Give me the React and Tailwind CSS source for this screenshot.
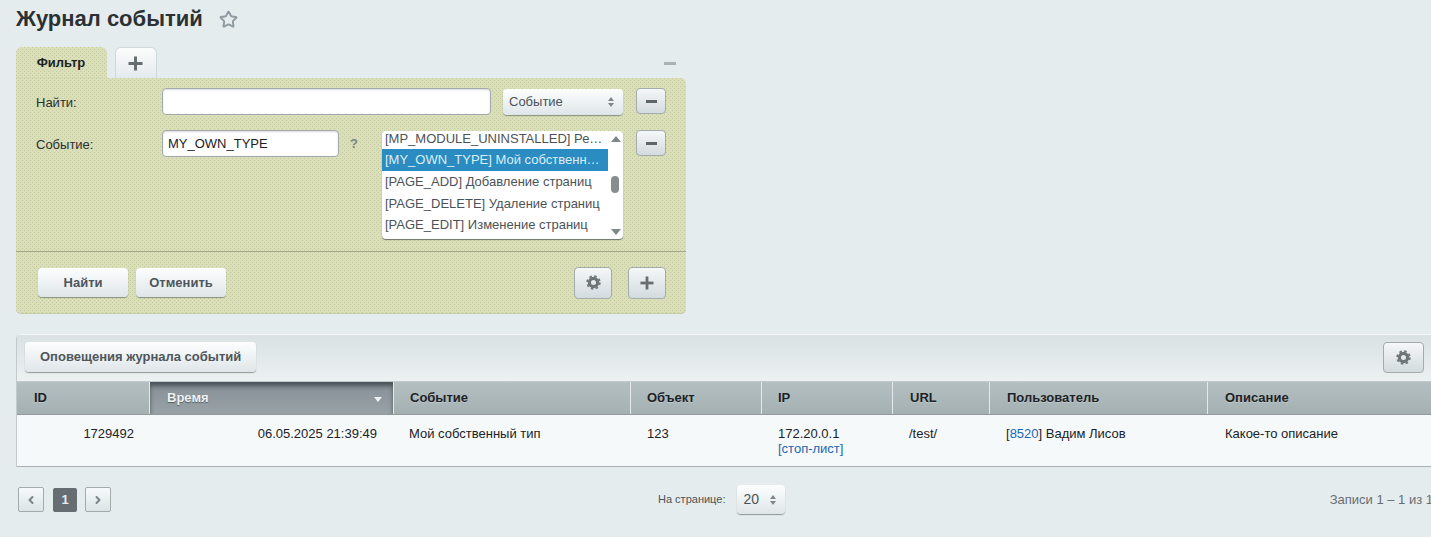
import { Star, ChevronLeft, ChevronRight } from 'lucide-react';

const dotted = 'bg-[#dadfba] bg-[radial-gradient(circle_at_0.5px_0.5px,#c3cb9d_0.75px,transparent_0.8px),radial-gradient(circle_at_2.5px_2.5px,#c3cb9d_0.75px,transparent_0.8px)] bg-[length:4px_4px]';
const lightBtn = 'bg-gradient-to-b from-[#fdfefe] to-[#dfe6e9] shadow-[0_1px_1px_rgba(70,80,80,0.55)]';
const iconBtn = 'flex items-center justify-center rounded-[4px] border border-[#a3abab] bg-gradient-to-b from-[#f5f7f8] to-[#d3dbde]';

const columns = [
  { title: 'ID', width: 'w-[133px]', pad: 'pl-[17px]' },
  { title: 'Время', width: 'w-[244px]', pad: 'pl-[17px]', sorted: true },
  { title: 'Событие', width: 'w-[237px]', pad: 'pl-4' },
  { title: 'Объект', width: 'w-[131px]', pad: 'pl-4' },
  { title: 'IP', width: 'w-[131px]', pad: 'pl-4' },
  { title: 'URL', width: 'w-[97px]', pad: 'pl-[17px]' },
  { title: 'Пользователь', width: 'w-[218px]', pad: 'pl-[17px]' },
  { title: 'Описание', width: 'w-[224px]', pad: 'pl-[17px]' },
];

const options = [
  '[PAGE_ADD] Добавление страниц',
  '[PAGE_DELETE] Удаление страниц',
  '[PAGE_EDIT] Изменение страниц',
];

function UpDown() {
  return (
    <span className="flex flex-col gap-[2px]">
      <span className="w-0 h-0 border-x-[3px] border-x-transparent border-b-[4px] border-b-[#7f878a]" />
      <span className="w-0 h-0 border-x-[3px] border-x-transparent border-t-[4px] border-t-[#7f878a]" />
    </span>
  );
}

function MinusButton() {
  return (
    <button className={`${iconBtn} w-[30px] h-[26px]`}>
      <span className="block w-[11px] h-[3px] bg-[#5d6567]" />
    </button>
  );
}

function PlusIcon({ size = 15 }) {
  return (
    <svg width={size} height={size} viewBox="0 0 15 15" fill="#666e71">
      <rect x="6" y="0.5" width="3" height="14" />
      <rect x="0.5" y="6" width="14" height="3" />
    </svg>
  );
}

function GearIcon() {
  return (
    <svg width="15" height="15" viewBox="0 0 16 16" fill="none" stroke="#6d7578">
      <circle cx="8" cy="8" r="4.4" strokeWidth="3.4" />
      <circle cx="8" cy="8" r="6.8" strokeWidth="1.8" strokeDasharray="2.67 2.67" />
    </svg>
  );
}

export default function App() {
  return (
    <div className="h-[537px] w-[1431px] overflow-hidden bg-[#e5ecee] text-[13px] text-[#1c2226] font-['Liberation_Sans',Arial,sans-serif]">
      <div className="flex items-center h-[38px] pl-4">
        <h1 className="text-[22px] leading-none font-bold text-[#2c3134]">Журнал событий</h1>
        <Star size={19} strokeWidth={2.4} className="ml-[16px] mt-px text-[#8f9ba1]" />
      </div>

      <div className="w-[670px] ml-4 mt-[9px]">
        <div className="flex items-end h-[31px]">
          <div className={`${dotted} w-[91px] h-[31px] rounded-t-[6px] flex items-center justify-center pl-[1px] text-[13px] font-bold text-[#1c2226]`}>
            <span className="pr-[2px]">Фильтр</span>
          </div>
          <div className="ml-2 w-[42px] h-[31px] rounded-t-[6px] border border-b-0 border-[#d0d8db] bg-gradient-to-b from-[#fbfcfc] to-[#e4eaec] flex items-center justify-center pr-[1px]">
            <PlusIcon />
          </div>
          <span className="ml-auto mr-[10px] mb-[13px] block w-[12px] h-[3px] bg-[#aab2b5]" />
        </div>

        <div className={`${dotted} h-[236px] rounded-b-[5px] rounded-tr-[5px] border-b border-[#c4cba5] flex flex-col`}>
          <div className="flex-1 pl-5 pr-5 pt-[10px] border-b border-[#a6ab8d]">
            <div className="flex items-start h-[27px]">
              <label className="w-[126px] mt-[5px] text-[13px] text-[#2b3034]">Найти:</label>
              <input className="w-[329px] h-[27px] rounded-[4px] border border-[#a1a9ad] bg-white shadow-[inset_0_1px_2px_rgba(0,0,0,0.15)]" />
              <div className={`${lightBtn} ml-3 mt-px w-[120px] h-[26px] rounded-[4px] flex items-center justify-between pl-[6px] pr-[9px] text-[#4b5358]`}>
                <span>Событие</span>
                <UpDown />
              </div>
              <div className="ml-[13px]"><MinusButton /></div>
            </div>

            <div className="flex items-start mt-[15px]">
              <label className="w-[126px] mt-[5px] text-[13px] text-[#2b3034]">Событие:</label>
              <input
                readOnly
                value="MY_OWN_TYPE"
                className="w-[177px] h-[27px] px-[5px] rounded-[4px] border border-[#a1a9ad] bg-white text-[13px] text-[#1c2226] shadow-[inset_0_1px_2px_rgba(0,0,0,0.15)]"
              />
              <span className="w-[43px] mt-[4px] pl-[11px] text-[13px] font-bold text-[#7d8584]">?</span>
              <div className="flex mt-px w-[241px] h-[108px] rounded-[4px] bg-white shadow-[0_1px_1px_rgba(60,70,70,0.7)] overflow-hidden text-[#4b5358] text-[13px] leading-[21.5px]">
                <div className="w-[226px] shrink-0">
                  <div className="h-[18px] leading-[15px] px-[3px] truncate">[MP_MODULE_UNINSTALLED] Ре…</div>
                  <div className="h-[22px] bg-[#2a8cc0] text-[#dcedf6] px-[3px] truncate">[MY_OWN_TYPE] Мой собственн…</div>
                  {options.map((o) => (
                    <div key={o} className="h-[21.5px] px-[3px] truncate">{o}</div>
                  ))}
                </div>
                <div className="relative flex-1">
                  <span className="absolute left-[3px] top-[5px] w-0 h-0 border-x-[5px] border-x-transparent border-b-[6px] border-b-[#7e8689]" />
                  <span className="absolute left-[3px] top-[45px] w-[8px] h-[17px] rounded-full bg-[#878e90]" />
                  <span className="absolute left-[3px] bottom-[4px] w-0 h-0 border-x-[5px] border-x-transparent border-t-[6px] border-t-[#7e8689]" />
                </div>
              </div>
              <div className="ml-[13px]"><MinusButton /></div>
            </div>
          </div>

          <div className="h-[61px] flex items-center pl-[22px] pr-5">
            <button className={`${lightBtn} w-[90px] h-[29px] rounded-[4px] text-[13px] font-bold text-[#4f565b]`}>Найти</button>
            <button className={`${lightBtn} ml-2 w-[90px] h-[29px] rounded-[4px] text-[13px] font-bold text-[#4f565b]`}>Отменить</button>
            <button className={`${iconBtn} ml-auto w-[38px] h-[32px]`}>
              <GearIcon />
            </button>
            <button className={`${iconBtn} ml-4 w-[38px] h-[32px]`}>
              <PlusIcon size={14} />
            </button>
          </div>
        </div>
      </div>

      <div className="ml-4 mt-5 w-[1415px] border-l border-[#c3cacc] border-t border-t-[#f6f8f8] rounded-tl-[5px]">
        <div className="h-[47px] flex items-center justify-between pl-2 pr-[7px] pb-[2px] bg-gradient-to-b from-[#d9e1e3] to-[#ecf1f2] border-b border-[#c2cacc]">
          <button className={`${lightBtn} h-[30px] px-[15px] rounded-[4px] text-[13px] font-bold text-[#4f565b]`}>
            Оповещения журнала событий
          </button>
          <button className={`${iconBtn} w-[41px] h-[31px]`}>
            <GearIcon />
          </button>
        </div>

        <div className="flex h-[33px] border-b border-[#8f9a9d]">
          {columns.map((c) => (
            <div
              key={c.title}
              className={`${c.width} ${c.pad} shrink-0 flex items-center text-[13px] font-bold border-r border-[#e4eaec] ${
                c.sorted
                  ? 'bg-gradient-to-b from-[#858f95] to-[#98a2a7] shadow-[inset_0_4px_4px_rgba(35,40,45,0.6)] text-[#eef2f3] [text-shadow:0_1px_1px_rgba(40,50,60,0.6)] justify-between pr-[11px]'
                  : 'bg-gradient-to-b from-[#b4bfc3] to-[#a5b0b3] text-[#1c2226] [text-shadow:0_1px_0_rgba(255,255,255,0.25)]'
              }`}
            >
              <span>{c.title}</span>
              {c.sorted && (
                <span className="w-0 h-0 mt-[2px] border-x-[4px] border-x-transparent border-t-[5px] border-t-[#eef2f3]" />
              )}
            </div>
          ))}
        </div>

        <div className="flex h-[52px] pt-[11px] bg-[#f5f9fa] border-b border-[#a9b1b2] text-[13px] leading-[15px]">
          <div className="w-[133px] shrink-0 pr-[16px] text-right">1729492</div>
          <div className="w-[244px] shrink-0 pr-[17px] text-right">06.05.2025 21:39:49</div>
          <div className="w-[237px] shrink-0 pl-[15px]">Мой собственный тип</div>
          <div className="w-[131px] shrink-0 pl-4">123</div>
          <div className="w-[131px] shrink-0 pl-4">
            <div>172.20.0.1</div>
            <a className="block text-[#2067b0]">[стоп-лист]</a>
          </div>
          <div className="w-[97px] shrink-0 pl-4">/test/</div>
          <div className="w-[218px] shrink-0 pl-4">[<a className="text-[#2067b0]">8520</a>] Вадим Лисов</div>
          <div className="w-[224px] shrink-0 pl-[17px]">Какое-то описание</div>
        </div>
      </div>

      <div className="flex items-center h-[33px] w-[1433px] mt-[16px] pl-[18px]">
        <div className="flex items-center w-[640px]">
          <button className={`${iconBtn} w-[26px] h-[25px] !from-[#f7fafb] !to-[#dbe4e7] !rounded-[2px]`}>
            <ChevronLeft size={12} strokeWidth={4} className="text-[#7b8487]" />
          </button>
          <span className="ml-[9px] w-[24px] h-[24px] rounded-[2px] bg-[#666e74] flex items-center justify-center text-[13px] font-bold text-[#e8edef]">1</span>
          <button className={`${iconBtn} ml-[8px] w-[26px] h-[25px] !from-[#f7fafb] !to-[#dbe4e7] !rounded-[2px]`}>
            <ChevronRight size={12} strokeWidth={4} className="text-[#7b8487]" />
          </button>
        </div>
        <span className="text-[11px] text-[#4c5459]">На странице:</span>
        <div className={`${lightBtn} ml-[12px] w-[48px] h-[29px] rounded-[4px] flex items-center justify-between pl-[6px] pr-[9px] text-[14px] text-[#4b5358]`}>
          <span>20</span>
          <UpDown />
        </div>
        <span className="ml-auto whitespace-nowrap text-[13px] text-[#666e72]">Записи 1 – 1 из 1</span>
      </div>
    </div>
  );
}
